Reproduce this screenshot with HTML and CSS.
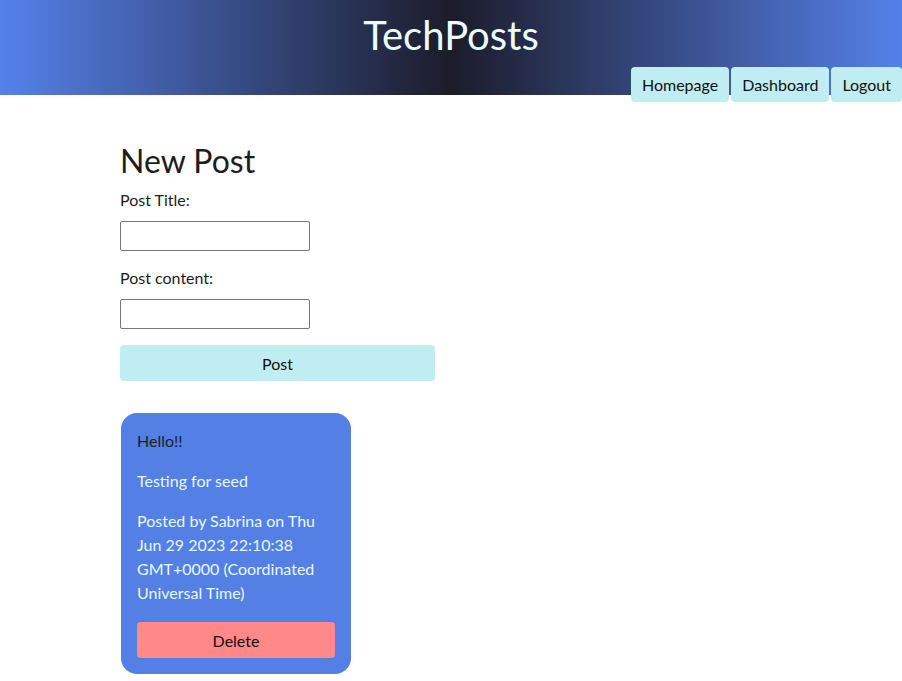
FILE: index.html
```html
<!DOCTYPE html>
<html>
<head>
<meta charset="utf-8">
<title>TechPosts</title>
<link rel="stylesheet" href="styles.css">
</head>
<body>
<header class="site-header">
  <h1 class="site-title">TechPosts</h1>
  <nav class="nav">
    <button class="nav-btn">Homepage</button>
    <button class="nav-btn">Dashboard</button>
    <button class="nav-btn">Logout</button>
  </nav>
</header>
<main class="main">
  <h2 class="form-title">New Post</h2>
  <form class="post-form">
    <label class="field-label">Post Title:</label>
    <input class="field-input" type="text">
    <label class="field-label second">Post content:</label>
    <input class="field-input" type="text">
    <button class="post-btn" type="button">Post</button>
  </form>
  <div class="card">
    <p class="card-title">Hello!!</p>
    <p class="card-text">Testing for seed</p>
    <p class="card-text">Posted by Sabrina on Thu Jun 29 2023 22:10:38 GMT+0000 (Coordinated Universal Time)</p>
    <button class="delete-btn" type="button">Delete</button>
  </div>
</main>
</body>
</html>
```
FILE: styles.css
```css
* { box-sizing: border-box; }
body {
  margin: 0;
  font-family: "Lato", "DejaVu Sans", sans-serif;
  color: #1d1d1d;
  background: #fff;
}
.site-header {
  height: 95px;
  display: flex;
  flex-direction: column;
  align-items: center;
  background: linear-gradient(to right, #5581ea 0%, #1c1c2a 50%, #5581ea 100%);
}
.site-title {
  margin: 10px 0 0;
  font-size: 40px;
  line-height: 50px;
  font-weight: normal;
  color: #ecfdff;
}
.nav {
  align-self: flex-end;
  margin-top: 7px;
  display: flex;
  gap: 2px;
}
.nav-btn {
  height: 35px;
  padding: 0 11px;
  border: none;
  border-radius: 4px;
  background: #c0edf2;
  font-family: inherit;
  font-size: 16px;
  color: #111;
}
.main {
  padding-left: 120px;
}
.form-title {
  margin: 47px 0 0;
  font-size: 32px;
  line-height: 37px;
  font-weight: normal;
  color: #1d1d1d;
}
.post-form {
  display: flex;
  flex-direction: column;
  align-items: flex-start;
}
.field-label {
  margin-top: 12px;
  font-size: 16px;
  line-height: 18px;
}
.field-label.second { margin-top: 18px; }
.field-input {
  margin-top: 12px;
  width: 190px;
  height: 30px;
  border: 1px solid #767676;
  border-radius: 2px;
}
.post-btn {
  margin-top: 16px;
  width: 315px;
  height: 36px;
  border: none;
  border-radius: 4px;
  background: #c0edf2;
  font-family: inherit;
  font-size: 16px;
  color: #111;
}
.card {
  margin-top: 32px;
  margin-left: 1px;
  width: 230px;
  padding: 16px;
  border-radius: 16px;
  background: #5480e6;
}
.card-title, .card-text {
  margin: 0 0 16px;
  font-size: 16px;
  line-height: 24px;
}
.card-title { color: #1d1d1d; }
.card-text { color: #e6f9ff; }
.card p:last-of-type { margin-bottom: 0; }
.delete-btn {
  display: block;
  width: 100%;
  height: 36px;
  margin-top: 17px;
  border: none;
  border-radius: 4px;
  background: #ff8888;
  font-family: inherit;
  font-size: 16px;
  color: #111;
}
```
